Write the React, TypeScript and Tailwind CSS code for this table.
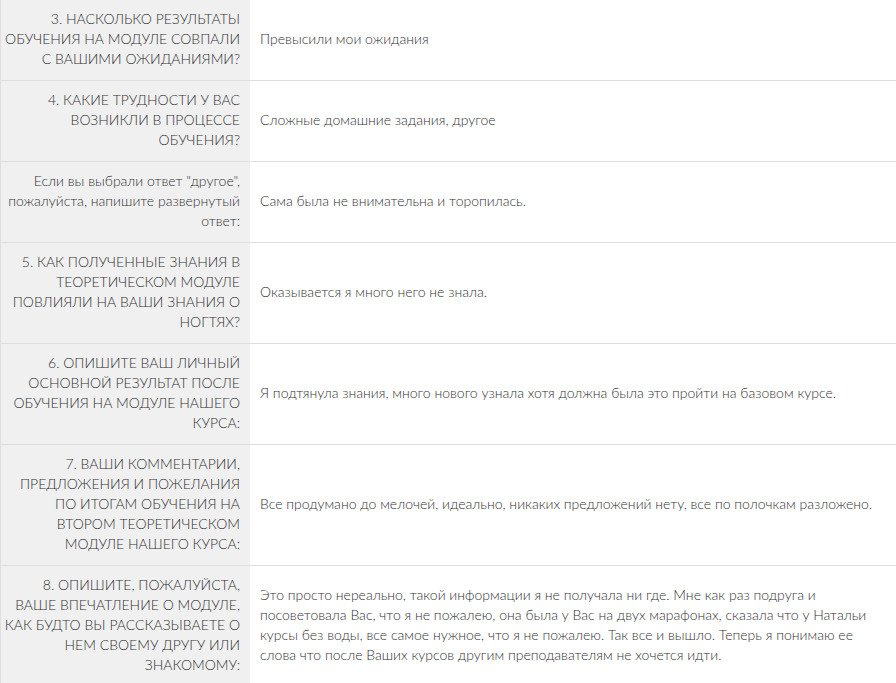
const rows: { q: string[]; a: string[] }[] = [
  {
    q: ["3. НАСКОЛЬКО РЕЗУЛЬТАТЫ", "ОБУЧЕНИЯ НА МОДУЛЕ СОВПАЛИ", "С ВАШИМИ ОЖИДАНИЯМИ?"],
    a: ["Превысили мои ожидания"],
  },
  {
    q: ["4. КАКИЕ ТРУДНОСТИ У ВАС", "ВОЗНИКЛИ В ПРОЦЕССЕ", "ОБУЧЕНИЯ?"],
    a: ["Сложные домашние задания, другое"],
  },
  {
    q: ['Если вы выбрали ответ "другое",', "пожалуйста, напишите развернутый", "ответ:"],
    a: ["Сама была не внимательна и торопилась."],
  },
  {
    q: ["5. КАК ПОЛУЧЕННЫЕ ЗНАНИЯ В", "ТЕОРЕТИЧЕСКОМ МОДУЛЕ", "ПОВЛИЯЛИ НА ВАШИ ЗНАНИЯ О", "НОГТЯХ?"],
    a: ["Оказывается я много него не знала."],
  },
  {
    q: ["6. ОПИШИТЕ ВАШ ЛИЧНЫЙ", "ОСНОВНОЙ РЕЗУЛЬТАТ ПОСЛЕ", "ОБУЧЕНИЯ НА МОДУЛЕ НАШЕГО", "КУРСА:"],
    a: ["Я подтянула знания, много нового узнала хотя должна была это пройти на базовом курсе."],
  },
  {
    q: [
      "7. ВАШИ КОММЕНТАРИИ,",
      "ПРЕДЛОЖЕНИЯ И ПОЖЕЛАНИЯ",
      "ПО ИТОГАМ ОБУЧЕНИЯ НА",
      "ВТОРОМ ТЕОРЕТИЧЕСКОМ",
      "МОДУЛЕ НАШЕГО КУРСА:",
    ],
    a: ["Все продумано до мелочей, идеально, никаких предложений нету, все по полочкам разложено."],
  },
  {
    q: [
      "8. ОПИШИТЕ, ПОЖАЛУЙСТА,",
      "ВАШЕ ВПЕЧАТЛЕНИЕ О МОДУЛЕ,",
      "КАК БУДТО ВЫ РАССКАЗЫВАЕТЕ О",
      "НЕМ СВОЕМУ ДРУГУ ИЛИ",
      "ЗНАКОМОМУ:",
    ],
    a: [
      "Это просто нереально, такой информации я не получала ни где. Мне как раз подруга и",
      "посоветовала Вас, что я не пожалею, она была у Вас на двух марафонах, сказала что у Натальи",
      "курсы без воды, все самое нужное, что я не пожалею. Так все и вышло. Теперь я понимаю ее",
      "слова что после Ваших курсов другим преподавателям не хочется идти.",
    ],
  },
];

const Lines = ({ lines }: { lines: string[] }) => (
  <>
    {lines.map((l, i) => (
      <span key={i} className="block whitespace-nowrap">
        {l}
      </span>
    ))}
  </>
);

export default function App() {
  return (
    <div className="min-h-screen bg-white font-['Lato','Liberation_Sans',sans-serif] text-[14px] font-light leading-[20px] text-[#333]">
      <div className="border-l border-[#dedede]">
        {rows.map((row, i) => (
          <div
            key={i}
            className={`flex ${i < rows.length - 1 ? "border-b border-[#dedede]" : ""}`}
          >
            <div className="w-[249px] shrink-0 bg-[#f0f0f0] pt-[9px] pb-[11px] pr-[10px] text-right">
              <Lines lines={row.q} />
            </div>
            <div className="flex flex-1 items-center pt-[9px] pb-[11px] pl-[10px]">
              <div>
                <Lines lines={row.a} />
              </div>
            </div>
          </div>
        ))}
      </div>
    </div>
  );
}
